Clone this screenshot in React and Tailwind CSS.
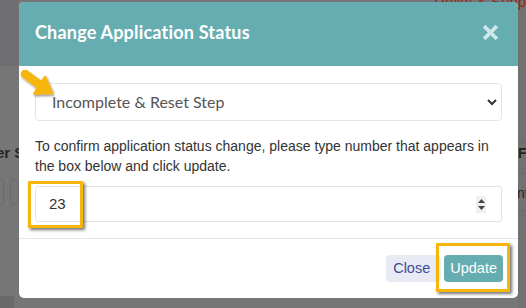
import React from 'react';

function Arrow() {
  return (
    <svg width="42" height="36" viewBox="0 0 42 36" className="absolute left-[18px] top-[66px]">
      <defs>
        <filter id="sh" x="-20%" y="-20%" width="150%" height="150%">
          <feDropShadow dx="1" dy="1.5" stdDeviation="1" floodColor="#000" floodOpacity="0.45" />
        </filter>
      </defs>
      <g filter="url(#sh)">
        <path d="M7 8 L22 19" stroke="#f6b60b" strokeWidth="8.5" strokeLinecap="round" fill="none" />
        <path d="M27 11 L34 27 L16.5 27.5 Z" fill="#f6b60b" stroke="#f6b60b" strokeWidth="2.5" strokeLinejoin="round" />
      </g>
    </svg>
  );
}

export default function App() {
  return (
    <div className="relative w-[526px] h-[308px] overflow-hidden bg-[#767676]" style={{ fontFamily: '"Liberation Sans", Arial, sans-serif' }}>
      {/* dimmed page behind the modal */}
      <div className="flex h-full w-full">
        <div className="w-[19px] flex flex-col">
          <div className="h-[66px] bg-[#6f6f72]" />
          <div className="mt-[76px] text-[15px] font-bold text-[#262626] whitespace-nowrap -ml-[4px]">er S</div>
          <div className="mt-[14px] flex gap-[6px] -ml-[2px]">
            <div className="h-[26px] w-[6px] rounded border border-[#6a6a6a]" />
            <div className="h-[26px] w-[10px] rounded border border-[#6a6a6a]" />
          </div>
          <div className="mt-auto h-[12px] w-[14px] bg-[#6a6a6a]" />
        </div>
        <div className="flex-1" />
        <div className="w-[8px] flex flex-col bg-[#717171]">
          <div className="h-[142px]" />
          <div className="border-t border-[#6a6a6a] text-[14px] font-bold text-[#222] whitespace-nowrap leading-[20px]">F</div>
          <div className="mt-[10px] border-t border-[#6a6a6a] pt-[10px] text-[14px] text-[#222] whitespace-nowrap leading-[18px] -ml-[1px]">nt</div>
          <div className="border-t border-[#6a6a6a] mt-[8px]" />
        </div>
      </div>
      <div className="absolute right-[0px] top-[-9px] text-[15px] text-[#8a2a1a] whitespace-nowrap">Relief & Supp</div>

      {/* modal */}
      <div className="absolute left-[19px] top-[2px] w-[499px] h-[296px] rounded-[5px] bg-white flex flex-col overflow-hidden">
        <div className="h-[64px] bg-[#66adb1] flex items-center justify-between pl-[16px] pr-[20px] shrink-0">
          <div className="text-[18px] font-bold text-white tracking-[0.2px] -mt-[4px]" style={{ fontFamily: 'Lato, "Open Sans", sans-serif' }}>
            Change Application Status
          </div>
          <svg width="15" height="15" viewBox="0 0 15 15" className="-mt-[3px]">
            <path d="M2.5 2.5 L12.5 12.5 M12.5 2.5 L2.5 12.5" stroke="#cfe7e8" strokeWidth="3.8" strokeLinecap="square" />
          </svg>
        </div>
        <div className="px-[16px] pt-[17px] pb-[16px] border-b border-[#e3e8ee]">
          <div className="h-[38px] rounded-[4px] border border-[#dfe6ea] flex items-center justify-between pl-[16px] pr-[3px]">
            <span className="text-[16px] text-[#555]" style={{ fontFamily: 'Lato, "Open Sans", sans-serif' }}>Incomplete &amp; Reset Step</span>
            <svg width="12" height="8" viewBox="0 0 12 8">
              <path d="M2 2 L6 6 L10 2" stroke="#333" strokeWidth="2" fill="none" />
            </svg>
          </div>
          <p className="mt-[16px] text-[14px] leading-[19.5px] text-[#333]">
            To confirm application status change, please type number that appears in the box below and click update.
          </p>
          <div className="mt-[10px] h-[36px] rounded-[3px] border border-[#dfe4ea] flex items-center justify-between pl-[13px] pr-[15px]">
            <span className="text-[15px] text-[#333]">23</span>
            <div className="flex flex-col items-center justify-center w-[10px] h-[17px] bg-[#f0f0f0] gap-[3px]">
              <svg width="7" height="4" viewBox="0 0 7 4"><path d="M0 4 L3.5 0 L7 4 Z" fill="#444" /></svg>
              <svg width="7" height="4" viewBox="0 0 7 4"><path d="M0 0 L3.5 4 L7 0 Z" fill="#444" /></svg>
            </div>
          </div>
        </div>
        <div className="flex justify-end items-center gap-[3px] pr-[15px] pt-[16px]">
          <button className="h-[27px] pl-[7px] pr-[11px] rounded-[4px] bg-[#e8ebf3] text-[14.5px] text-[#3b4a9b]">Close</button>
          <button className="h-[27px] px-[6px] rounded-[4px] bg-[#66adb1] text-[14.5px] text-white">Update</button>
        </div>

        <div className="absolute left-[9px] top-[179px] w-[55px] h-[47px] border-[3px] border-[#f6b60b] shadow-[2px_2px_3px_rgba(0,0,0,0.55)]" />
        <div className="absolute left-[417px] top-[241px] w-[74px] h-[49px] border-[3px] border-[#f6b60b] shadow-[2px_2px_3px_rgba(0,0,0,0.55)]" />
      </div>
      <Arrow />
    </div>
  );
}
